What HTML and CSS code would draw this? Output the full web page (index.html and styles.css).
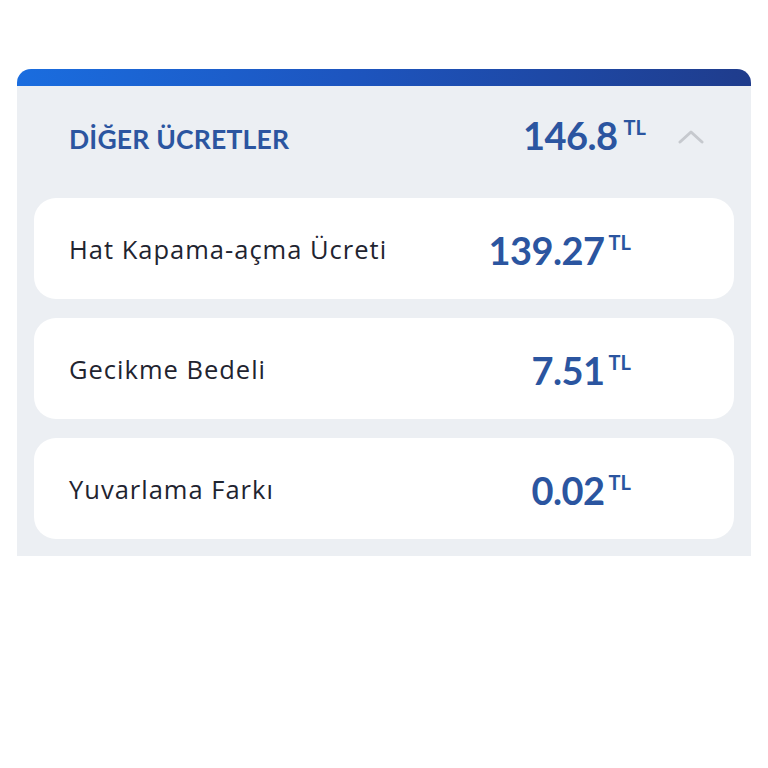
FILE: index.html
```html
<!DOCTYPE html>
<html lang="tr">
<head>
<meta charset="utf-8">
<title>Diğer Ücretler</title>
<link rel="stylesheet" href="styles.css">
</head>
<body>
<div class="wrap">
  <section class="card">
    <div class="bar"></div>
    <div class="panel">
      <header class="head">
        <h2 class="title">DİĞER ÜCRETLER</h2>
        <div class="amount amount-head"><span class="num">146.8</span><span class="cur">TL</span></div>
        <span class="chev">
          <svg width="26" height="14" viewBox="0 0 26 14"><path d="M2 12 L13 2 L24 12" fill="none" stroke="#c6c9ce" stroke-width="3" stroke-linecap="round" stroke-linejoin="round"/></svg>
        </span>
      </header>
      <div class="rows">
        <div class="row">
          <span class="label">Hat Kapama-açma Ücreti</span>
          <div class="amount"><span class="num">139.27</span><span class="cur">TL</span></div>
        </div>
        <div class="row">
          <span class="label">Gecikme Bedeli</span>
          <div class="amount"><span class="num">7.51</span><span class="cur">TL</span></div>
        </div>
        <div class="row">
          <span class="label">Yuvarlama Farkı</span>
          <div class="amount"><span class="num">0.02</span><span class="cur">TL</span></div>
        </div>
      </div>
    </div>
  </section>
</div>
</body>
</html>
```
FILE: styles.css
```css
* { box-sizing: border-box; }
html, body { margin: 0; padding: 0; background: #ffffff; }
body { font-family: "Lato", "Open Sans", sans-serif; }

.wrap { padding: 69px 17px 0 17px; }

.card { width: 734px; }

.bar {
  height: 17px;
  border-radius: 14px 14px 0 0;
  background: linear-gradient(90deg, #1a6ddf 0%, #1d55bf 45%, #1f3c8c 100%);
}

.panel {
  background: #eceff3;
  padding: 0 17px 17px 17px;
}

.head {
  height: 112px;
  display: flex;
  align-items: center;
  padding-left: 35px;
  padding-bottom: 6px;
}

.title {
  flex: 1;
  margin: 0;
  font-size: 26.5px;
  font-weight: 700;
  color: #2b55a0;
  letter-spacing: 0.2px;
}

.amount {
  display: flex;
  align-items: flex-start;
  color: #2b55a0;
  font-weight: 700;
}
.num { font-size: 38px; line-height: 40px; letter-spacing: -0.5px; }
.cur { font-size: 20px; line-height: 22px; margin-left: 4px; margin-top: 1px; }

.amount-head { margin-top: -8px; }
.amount-head .cur { margin-left: 6px; }

.chev {
  width: 26px;
  height: 14px;
  display: flex;
  margin-left: 32px;
  margin-right: 30px;
  margin-top: -4px;
}

.rows {
  display: flex;
  flex-direction: column;
  gap: 19px;
}

.row {
  height: 101px;
  background: #ffffff;
  border-radius: 22px;
  display: flex;
  align-items: center;
  padding: 0 103px 0 35px;
}

.label {
  flex: 1;
  font-family: "Open Sans", "Lato", sans-serif;
  font-size: 25.5px;
  letter-spacing: 1px;
  color: #1f2430;
}

.row .amount { margin-top: 3px; }
```
